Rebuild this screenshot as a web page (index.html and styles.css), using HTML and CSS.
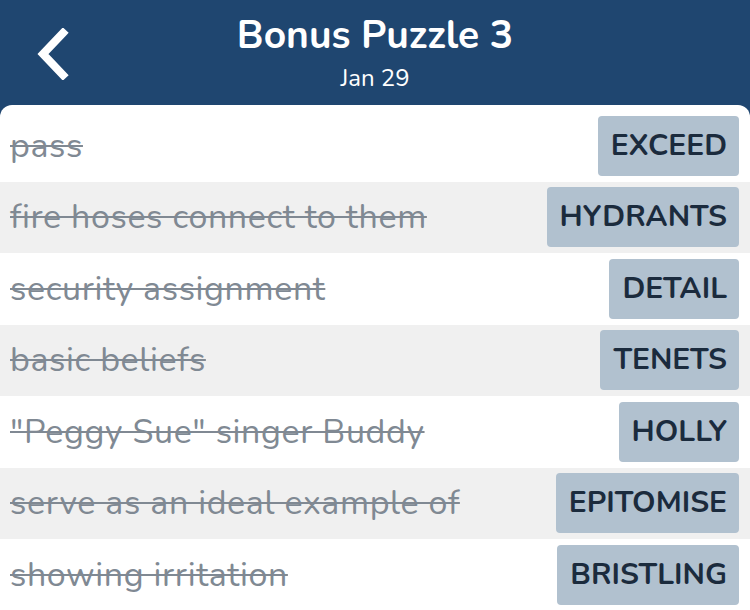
FILE: index.html
```html
<!DOCTYPE html>
<html lang="en">
<head>
  <meta charset="UTF-8" />
  <meta name="viewport" content="width=device-width, initial-scale=1.0" />
  <title>Bonus Puzzle 3</title>
  <link rel="stylesheet" href="styles.css">
</head>
<body>
  <div class="header">
    <button class="back-btn" aria-label="Back">
      <svg width="34" height="52" viewBox="0 0 34 52">
        <polyline points="27,5 7,26 27,47" fill="none" stroke="#fff" stroke-width="8" stroke-linecap="square" stroke-linejoin="miter" />
      </svg>
    </button>
    <div class="titles">
      <h1>Bonus Puzzle 3</h1>
      <div class="date">Jan 29</div>
    </div>
  </div>

  <div class="card">
    <div class="row">
      <span class="clue">pass</span>
      <span class="answer">EXCEED</span>
    </div>
    <div class="row">
      <span class="clue">fire hoses connect to them</span>
      <span class="answer">HYDRANTS</span>
    </div>
    <div class="row">
      <span class="clue">security assignment</span>
      <span class="answer">DETAIL</span>
    </div>
    <div class="row">
      <span class="clue">basic beliefs</span>
      <span class="answer">TENETS</span>
    </div>
    <div class="row">
      <span class="clue">"Peggy Sue" singer Buddy</span>
      <span class="answer">HOLLY</span>
    </div>
    <div class="row">
      <span class="clue">serve as an ideal example of</span>
      <span class="answer">EPITOMISE</span>
    </div>
    <div class="row">
      <span class="clue">showing irritation</span>
      <span class="answer">BRISTLING</span>
    </div>
  </div>
</body>
</html>
```

FILE: styles.css
```css
body {
  margin: 0;
  font-family: "Nunito", "Lato", "Noto Sans", sans-serif;
  background: #1f4670;
  overflow: hidden;
}
.header {
  height: 105px;
  position: relative;
  display: flex;
  justify-content: center;
  color: white;
}
.back-btn {
  position: absolute;
  left: 36px;
  top: 28px;
  background: none;
  border: none;
  padding: 0;
  cursor: pointer;
}
.titles {
  text-align: center;
  padding-top: 12px;
}
h1 {
  margin: 0;
  font-size: 39px;
  font-weight: 700;
  line-height: 48px;
}
.date {
  font-size: 24px;
  line-height: 30px;
  margin-top: 3px;
}
.card {
  background: white;
  border-radius: 12px 12px 0 0;
  padding-top: 5px;
  height: 505px;
}
.row {
  height: 71.5px;
  display: flex;
  align-items: center;
  justify-content: space-between;
  padding: 0 11px 0 10px;
}
.row:nth-child(even) {
  background: #f0f0f0;
}
.clue {
  font-size: 34px;
  letter-spacing: 0.6px;
  color: #808993;
  text-decoration: line-through;
  text-decoration-thickness: 2px;
}
.answer {
  background: #b1c1cf;
  color: #1b2b3d;
  font-size: 30px;
  font-weight: 700;
  height: 60px;
  line-height: 60px;
  padding: 0 12px 0 13px;
  border-radius: 4px;
}
```
